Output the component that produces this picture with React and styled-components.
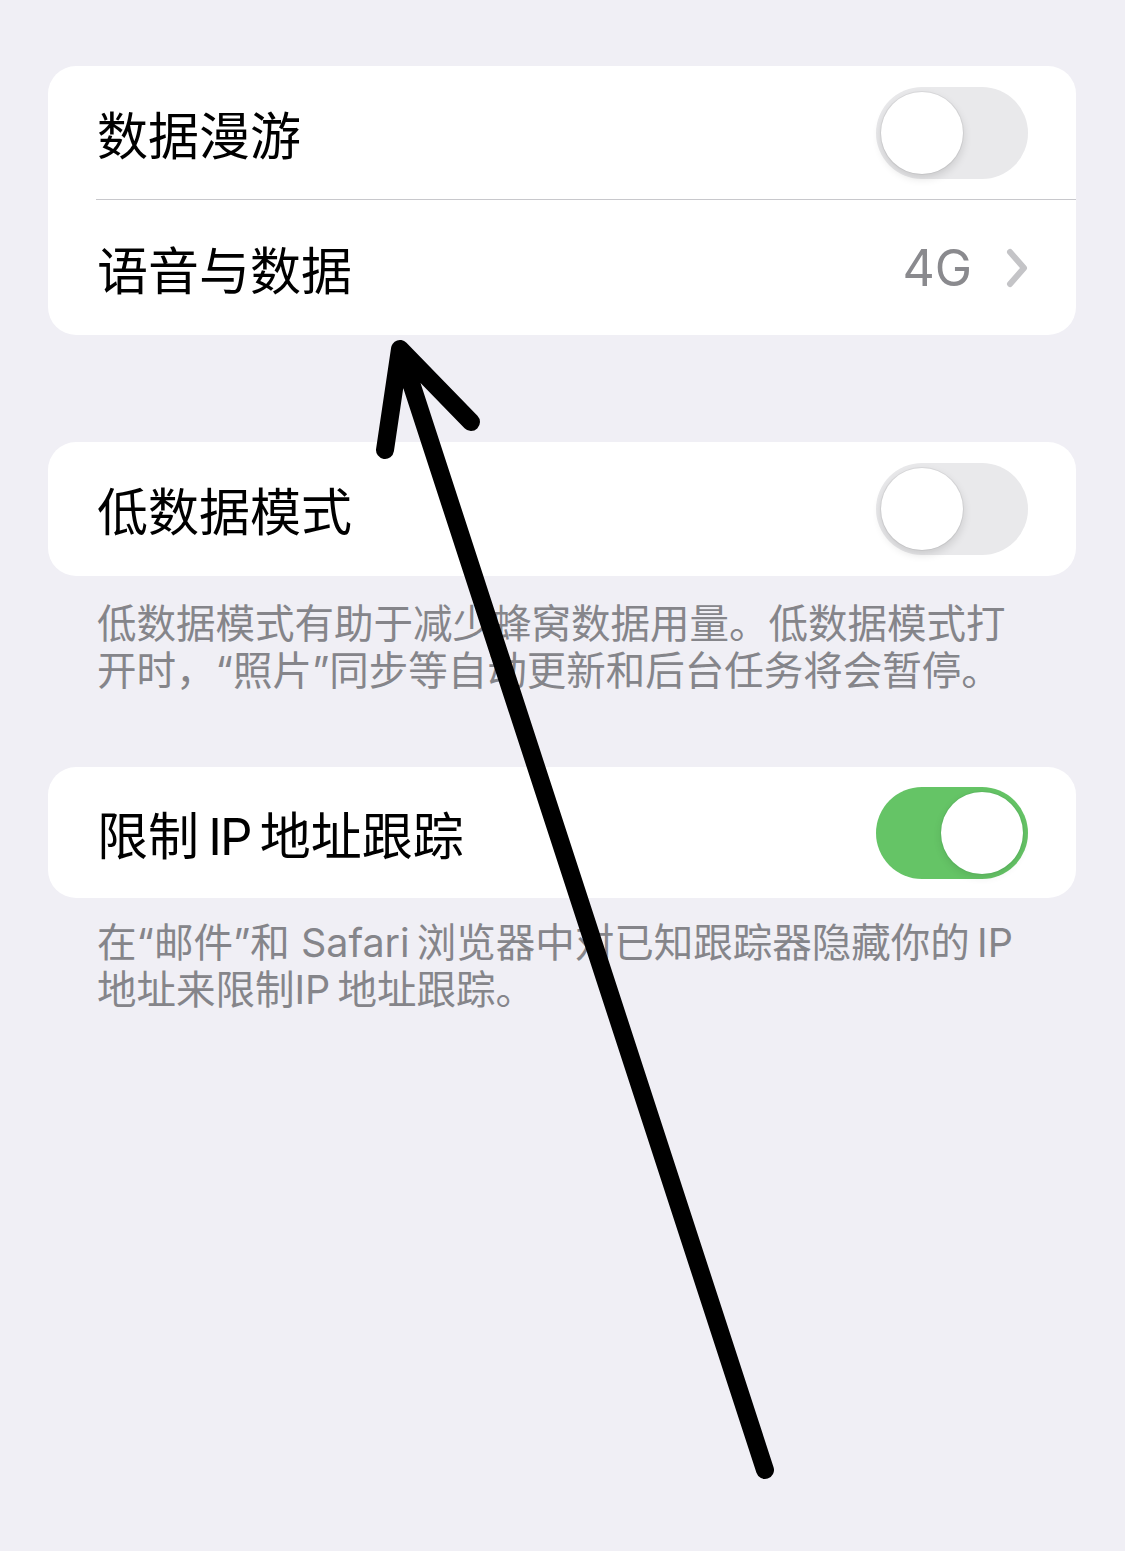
import React from "react";
import styled, { createGlobalStyle } from "styled-components";

const Global = createGlobalStyle`
  html, body {
    margin: 0;
    padding: 0;
    background: #f0eff5;
  }
  body {
    font-family: Inter, "Noto Sans CJK SC", "Noto Sans", sans-serif;
    -webkit-font-smoothing: antialiased;
  }
`;

const Page = styled.div`
  position: relative;
  width: 1125px;
  min-height: 1551px;
  box-sizing: border-box;
  padding: 66px 49px 0 48px;
  display: flex;
  flex-direction: column;
`;

const Section = styled.section`
  display: flex;
  flex-direction: column;
  margin-bottom: ${(p) => p.$gap}px;
`;

const Card = styled.div`
  background: #ffffff;
  border-radius: 28px;
  overflow: hidden;
  display: flex;
  flex-direction: column;
`;

const Row = styled.div`
  height: ${(p) => p.$h || 134}px;
  display: flex;
  align-items: center;
  padding: 0 48px 0 49px;
  position: relative;
  ${(p) =>
    p.$divider &&
    `
    &::after {
      content: "";
      position: absolute;
      left: 48px;
      right: 0;
      bottom: 0;
      height: 1px;
      background: #c8c8cc;
    }
  `}
`;

const Title = styled.span`
  flex: 1;
  font-size: 51px;
  color: #000;
  white-space: nowrap;
`;

const Latin = styled.span`
  letter-spacing: -0.04em;
`;

const Detail = styled.span`
  display: flex;
  align-items: center;
  gap: 34px;
  font-size: 50px;
  color: #8a8a8e;
`;

const Track = styled.div`
  width: 152px;
  height: 92px;
  border-radius: 46px;
  background: ${(p) => (p.$on ? "#65c466" : "#e9e9eb")};
  display: flex;
  align-items: center;
  justify-content: ${(p) => (p.$on ? "flex-end" : "flex-start")};
  padding: 0 5px;
  box-sizing: border-box;
`;

const Knob = styled.div`
  width: 82px;
  height: 82px;
  border-radius: 50%;
  background: #fff;
  box-shadow: ${(p) =>
    p.$on
      ? "0 0 0 1px rgba(80,170,90,0.35), 0 3px 8px rgba(0,0,0,0.10)"
      : "0 0 0 1px rgba(0,0,0,0.06), 0 4px 10px rgba(0,0,0,0.14)"};
`;

const Footer = styled.p`
  margin: 0;
  padding: ${(p) => p.$top}px 48px 0 49px;
  font-size: 39.5px;
  line-height: 47px;
  color: #85858a;
`;

const Overlay = styled.svg`
  position: absolute;
  top: 0;
  left: 0;
  pointer-events: none;
`;

function Toggle({ on }) {
  return (
    <Track $on={on}>
      <Knob $on={on} />
    </Track>
  );
}

function Chevron() {
  return (
    <svg width="22" height="40" viewBox="0 0 22 40">
      <path
        d="M4 4 L18 20 L4 36"
        fill="none"
        stroke="#c4c4c7"
        strokeWidth="6"
        strokeLinecap="round"
        strokeLinejoin="round"
      />
    </svg>
  );
}

const THIN = "\u2009";

export default function App() {
  return (
    <>
      <Global />
      <Page>
        <Section $gap={107}>
          <Card>
            <Row $divider>
              <Title>数据漫游</Title>
              <Toggle on={false} />
            </Row>
            <Row $h={135}>
              <Title>语音与数据</Title>
              <Detail>
                4G
                <Chevron />
              </Detail>
            </Row>
          </Card>
        </Section>

        <Section $gap={72}>
          <Card>
            <Row>
              <Title>低数据模式</Title>
              <Toggle on={false} />
            </Row>
          </Card>
          <Footer $top={25}>
            低数据模式有助于减少蜂窝数据用量。低数据模式打开时，“照片”同步等自动更新和后台任务将会暂停。
          </Footer>
        </Section>

        <Section $gap={0}>
          <Card>
            <Row $h={131}>
              <Title>
                限制{THIN}
                <Latin>IP</Latin>
                {THIN}地址跟踪
              </Title>
              <Toggle on />
            </Row>
          </Card>
          <Footer $top={22}>
            在“邮件”和 Safari{THIN}浏览器中对已知跟踪器隐藏你的{THIN}IP{THIN}地址来限制IP{THIN}地址跟踪。
          </Footer>
        </Section>

        <Overlay width="1125" height="1551" viewBox="0 0 1125 1551">
          <path
            d="M765 1470 L400 349 M385 450 L400 349 L471 422"
            fill="none"
            stroke="#000"
            strokeWidth="18"
            strokeLinecap="round"
            strokeLinejoin="round"
          />
        </Overlay>
      </Page>
    </>
  );
}
